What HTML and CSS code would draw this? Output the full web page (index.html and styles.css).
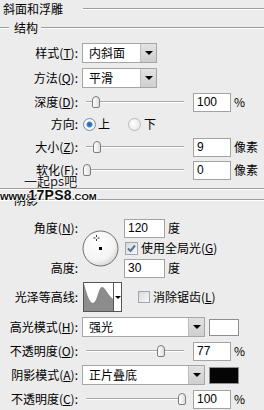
FILE: index.html
```html
<!DOCTYPE html>
<html lang="zh-CN">
<head>
<meta charset="utf-8">
<title>斜面和浮雕</title>
<link rel="stylesheet" href="styles.css">
</head>
<body>
<div class="dlg">
  <div class="title"><span>斜面和浮雕</span><i class="rule grow"></i></div>
  <div class="legend l1"><i class="rule lead"></i><span>结构</span><i class="rule grow"></i></div>

  <div class="row m5">
    <div class="lab">样式(<u>T</u>):</div>
    <div class="select w75"><span>内斜面</span><b class="btn"></b></div>
  </div>
  <div class="row m5">
    <div class="lab">方法(<u>Q</u>):</div>
    <div class="select w75"><span>平滑</span><b class="btn"></b></div>
  </div>
  <div class="row m4">
    <div class="lab">深度(<u>D</u>):</div>
    <div class="slider"><i class="track"></i><i class="thumb" style="left:14px"></i></div>
    <div class="num">100</div><span class="unit">%</span>
  </div>
  <div class="row m2">
    <div class="lab">方向:</div>
    <i class="radio on"></i><span class="rtext">上</span>
    <i class="radio r2"></i><span class="rtext">下</span>
  </div>
  <div class="row m3">
    <div class="lab">大小(<u>Z</u>):</div>
    <div class="slider"><i class="track"></i><i class="thumb" style="left:15px"></i></div>
    <div class="num">9</div><span class="unit">像素</span>
  </div>
  <div class="row m3">
    <div class="lab">软化(<u>F</u>):</div>
    <div class="slider"><i class="track"></i><i class="thumb" style="left:5px"></i></div>
    <div class="num">0</div><span class="unit">像素</span>
  </div>

  <i class="rule full end"></i>
  <div class="legend l2"><i class="rule lead"></i><span>阴影</span><i class="rule grow"></i></div>

  <div class="angle">
    <div class="lab ga">角度(<u>N</u>):</div>
    <div class="dial">
      <svg width="38" height="38" viewBox="0 0 38 38">
        <defs>
          <radialGradient id="dg" cx="40%" cy="35%" r="70%">
            <stop offset="0" stop-color="#ffffff"/>
            <stop offset="0.7" stop-color="#f4f4f4"/>
            <stop offset="1" stop-color="#d2d2d2"/>
          </radialGradient>
        </defs>
        <circle cx="18.5" cy="18.5" r="17.5" fill="url(#dg)" stroke="#6f6f6f" stroke-width="1"/>
        <rect x="17" y="17" width="3" height="3" fill="#000"/>
        <path d="M14.5 5v2M14.5 9v2M11.5 8h2M15.5 8h2" stroke="#333" stroke-width="1"/>
      </svg>
    </div>
    <div class="cell c1"><div class="num w41">120</div><span class="unit">度</span></div>
    <div class="cell c2"><i class="cb on"><svg width="11" height="11" viewBox="0 0 11 11"><path d="M2 5.5l2.5 2.5L9 2.5" fill="none" stroke="#5a7396" stroke-width="2"/></svg></i><span class="cbtext">使用全局光(<u>G</u>)</span></div>
    <div class="lab gh">高度:</div>
    <div class="cell c3"><div class="num w41">30</div><span class="unit">度</span></div>
  </div>

  <div class="row contour-row m4">
    <div class="lab">光泽等高线:</div>
    <div class="contour">
      <div class="pic">
        <svg width="29" height="28" viewBox="0 0 29 28">
          <path d="M0 28V1C2 7 4 16 7 19C9 21 11 20 13 14C15 8 16 4 18 4C21 4 24 12 29 16V28Z" fill="#8c8c8c"/>
        </svg>
      </div>
      <div class="cbtn"></div>
    </div>
    <i class="cb aa"></i><span class="cbtext">消除锯齿(<u>L</u>)</span>
  </div>

  <div class="row m5">
    <div class="lab">高光模式(<u>H</u>):</div>
    <div class="select w123"><span>强光</span><b class="btn"></b></div>
    <i class="swatch white"></i>
  </div>
  <div class="row m4">
    <div class="lab">不透明度(<u>O</u>):</div>
    <div class="slider"><i class="track"></i><i class="thumb" style="left:79px"></i></div>
    <div class="num">77</div><span class="unit">%</span>
  </div>
  <div class="row m4">
    <div class="lab">阴影模式(<u>A</u>):</div>
    <div class="select w123"><span>正片叠底</span><b class="btn"></b></div>
    <i class="swatch black"></i>
  </div>
  <div class="row m4">
    <div class="lab">不透明度(<u>C</u>):</div>
    <div class="slider"><i class="track"></i><i class="thumb" style="left:100px"></i></div>
    <div class="num">100</div><span class="unit">%</span>
  </div>

  <div class="wm">
    <div class="wm1">一起ps吧</div>
    <div class="wm2"><span class="ws">www.</span><span class="wb">17PS8</span><span class="ws wc">.COM</span></div>
  </div>
</div>
</body>
</html>
```

FILE: styles.css
```css
* { box-sizing: border-box; }
html, body { margin: 0; padding: 0; }
body {
  width: 264px;
  height: 410px;
  overflow: hidden;
  background: #ececec;
  color: #000000;
  font-family: "Noto Sans CJK SC", "Liberation Sans", sans-serif;
  font-size: 12px;
  line-height: 14px;
}
u { text-decoration: underline; text-underline-offset: 1px; }
i, b { display: block; font-style: normal; }

.dlg { position: relative; display: flex; flex-direction: column; }

.rule { height: 2px; border-top: 1px solid #9d9d9d; border-bottom: 1px solid #ffffff; }
.grow { flex: 1; }
.full { width: 264px; }

.title { height: 18px; display: flex; align-items: center; padding-left: 3px; }
.title .rule { margin-left: 20px; }

.legend { height: 20px; display: flex; align-items: center; }
.legend .lead { width: 9px; }
.legend span { padding: 0 3px 0 5px; }

.end { margin-top: 8px; }
.l2 { margin-top: 0; height: 20px; }

.row { display: flex; align-items: center; height: 20px; }
.m2 { margin-top: 2px; }
.m3 { margin-top: 3px; }
.m4 { margin-top: 4px; }
.m5 { margin-top: 5px; }

.lab { width: 82px; padding-right: 4px; text-align: right; white-space: nowrap; flex: none; }

.select {
  display: flex;
  height: 20px;
  border: 1px solid #a6a6a6;
  background: #ffffff;
}
.w75 { width: 75px; }
.w123 { width: 123px; }
.select span { flex: 1; padding-left: 6px; line-height: 18px; white-space: nowrap; }
.select .btn {
  width: 16px;
  background: linear-gradient(#e2e2e2, #cfcfcf);
  border-left: 1px solid #bdbdbd;
  display: flex;
  align-items: center;
  justify-content: center;
}
.select .btn::after {
  content: "";
  border-left: 4px solid transparent;
  border-right: 4px solid transparent;
  border-top: 4px solid #000;
}

.slider { position: relative; width: 107px; height: 20px; flex: none; }
.track {
  position: absolute;
  left: 4px;
  right: 5px;
  top: 9px;
  height: 2px;
  border-top: 1px solid #a9a9a9;
  border-bottom: 1px solid #ffffff;
}
.thumb {
  position: absolute;
  top: 4px;
  width: 8px;
  height: 12px;
  margin-left: -4px;
  border: 1px solid #7d7d7d;
  border-radius: 4px 4px 2px 2px;
  background: linear-gradient(90deg, #ffffff, #dedede);
}

.num {
  width: 38px;
  height: 19px;
  margin-left: 4px;
  border: 1px solid #a3a3a3;
  background: #ffffff;
  padding-left: 3px;
  font-family: "Liberation Sans", Arial, sans-serif;
  font-size: 12px;
  line-height: 17px;
  flex: none;
}
.w41 { width: 41px; margin-left: 0; }
.unit { margin-left: 3px; white-space: nowrap; }

.radio {
  width: 13px;
  height: 13px;
  border-radius: 50%;
  border: 1px solid #b9b9b9;
  background: radial-gradient(circle at 40% 40%, #ffffff, #e2e2e2);
  margin-left: 1px;
}
.radio.on {
  border-color: #7b8ea6;
  background: radial-gradient(circle, #1f5fa8 0, #3f86c9 2.5px, #ffffff 3.5px, #e8ecf0 6px);
}
.rtext { margin-left: 2px; }
.r2 { margin-left: 18px; }
.r2 + .rtext { margin-left: 3px; }

.angle {
  margin-top: 8px;
  display: grid;
  grid-template-columns: 82px 42px 1fr;
  grid-template-rows: 20px 16px 20px;
  row-gap: 2px;
  align-items: center;
}
.ga { grid-column: 1; grid-row: 1; }
.gh { grid-column: 1; grid-row: 3; }
.dial { grid-column: 2; grid-row: 1 / 4; align-self: center; height: 38px; margin-top: 1px; }
.dial svg { display: block; }
.cell { display: flex; align-items: center; grid-column: 3; }
.c1 { grid-row: 1; }
.c2 { grid-row: 2; }
.c3 { grid-row: 3; }

.cb {
  width: 13px;
  height: 13px;
  border: 1px solid #9ea6b0;
  background: linear-gradient(135deg, #d9d9d9, #f8f8f8);
  display: flex;
  align-items: center;
  justify-content: center;
  flex: none;
}
.cb svg { display: block; }
.c2 .cb { margin-left: 1px; }
.cbtext { margin-left: 3px; white-space: nowrap; }

.contour-row { height: 30px; }
.contour {
  display: flex;
  margin-left: 1px;
  width: 39px;
  height: 30px;
  border: 1px solid #555555;
  background: #ffffff;
}
.contour .pic { width: 30px; border-right: 1px solid #555555; display: flex; align-items: flex-end; }
.contour .pic svg { display: block; }
.contour .cbtn { flex: 1; display: flex; align-items: center; justify-content: center; }
.contour .cbtn::after {
  content: "";
  border-left: 3px solid transparent;
  border-right: 3px solid transparent;
  border-top: 3px solid #000;
}
.aa { margin-left: 16px; width: 12px; height: 12px; }

.swatch { width: 30px; height: 17px; margin-left: 4px; border: 1px solid #8f8f8f; }
.swatch.white { background: #ffffff; }
.swatch.black { background: #050505; }

.wm {
  position: absolute;
  left: 0;
  top: 174px;
  color: #1e1e1e;
}
.wm1 {
  margin-left: 24px;
  height: 14px;
  font-size: 13px;
  line-height: 14px;
  text-shadow: 0 0 2px #ffffff, 0 0 2px #ffffff;
}
.wm2 {
  display: flex;
  align-items: baseline;
  height: 13px;
  margin-top: 1px;
  font-family: "Liberation Sans", Arial, sans-serif;
  font-weight: bold;
  color: #101010;
  text-shadow: 1px 0 0 #fff, -1px 0 0 #fff, 0 1px 0 #fff, 0 -1px 0 #fff;
}
.ws { font-size: 11px; line-height: 12px; }
.wb { font-size: 14px; line-height: 13px; letter-spacing: 0.3px; }
.wc { font-size: 9.5px; }
```
